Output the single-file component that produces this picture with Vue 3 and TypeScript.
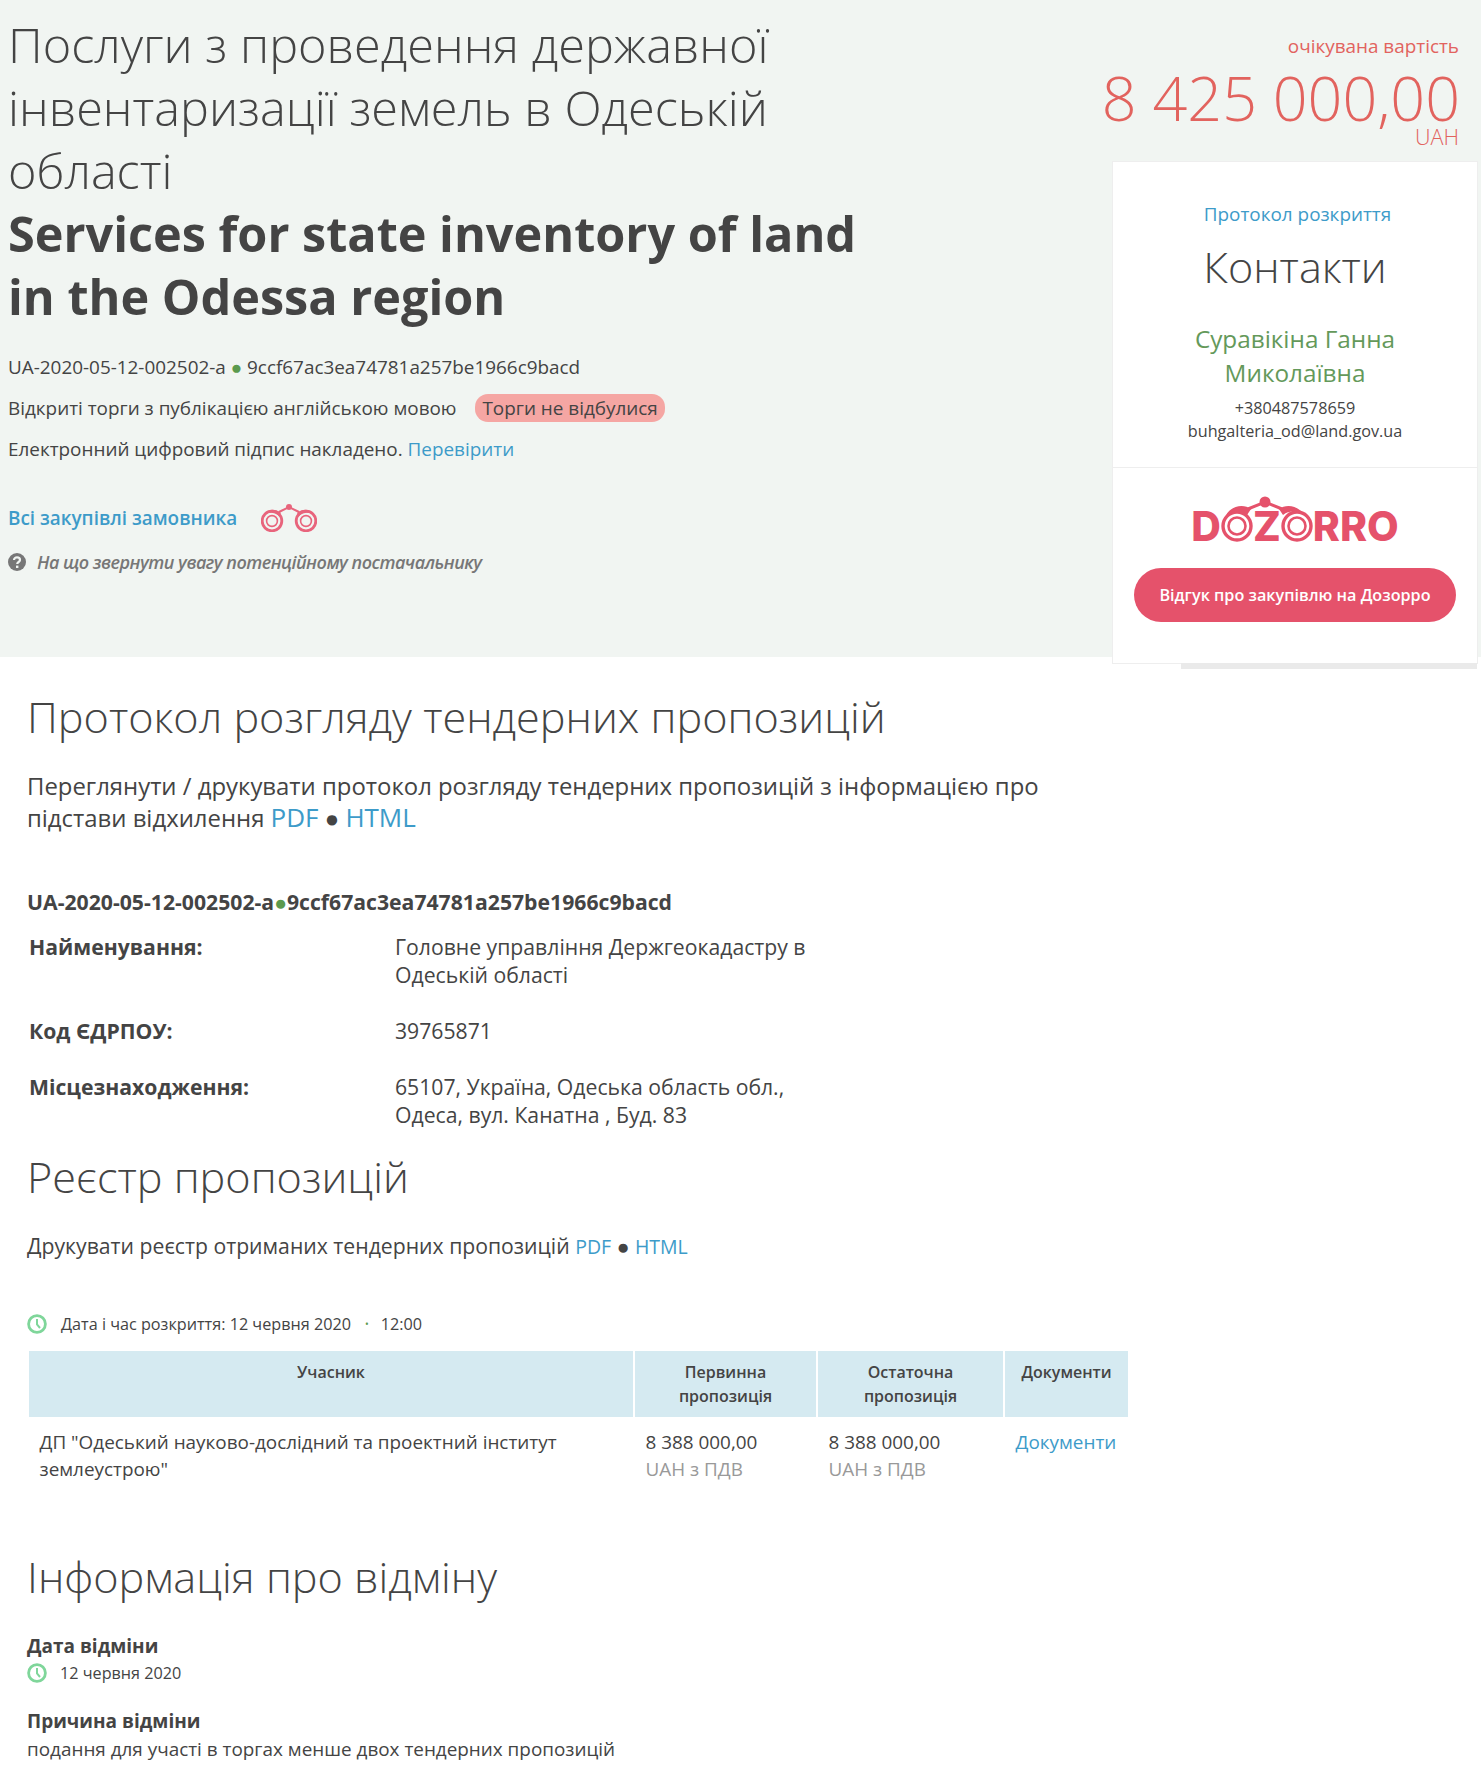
<template>
  <div class="page">
    <header class="top">
      <div class="top-main">
        <h1 class="title">
          Послуги з проведення державної інвентаризації земель в Одеській області
          <strong>Services for state inventory of land in the Odessa region</strong>
        </h1>
        <p class="meta first">UA-2020-05-12-002502-a <span class="dot">●</span> 9ccf67ac3ea74781a257be1966c9bacd</p>
        <p class="meta">
          Відкриті торги з публікацією англійською мовою
          <span class="status">Торги не відбулися</span>
        </p>
        <p class="meta">Електронний цифровий підпис накладено. <a class="link">Перевірити</a></p>
        <div class="buyer">
          <a class="link">Всі закупівлі замовника</a>
          <svg class="bino" viewBox="0 0 56 28" fill="none" stroke="#e8647c">
            <circle cx="11" cy="17" r="9.8" stroke-width="2.8" />
            <circle cx="11" cy="17" r="5.4" stroke-width="1.6" />
            <circle cx="45" cy="17" r="9.8" stroke-width="2.8" />
            <circle cx="45" cy="17" r="5.4" stroke-width="1.6" />
            <path d="M3 11 C6 5 14 4 20 9 L18 12 C13 8 8 8 3 11 Z" fill="#e8647c" stroke="none" />
            <path d="M53 11 C50 5 42 4 36 9 L38 12 C43 8 48 8 53 11 Z" fill="#e8647c" stroke="none" />
            <path d="M18 8 L28 3 L38 8" stroke-width="2" />
            <circle cx="28" cy="3" r="3" fill="#e8647c" stroke="none" />
          </svg>
        </div>
        <p class="hint">
          <svg class="hint-icon" viewBox="0 0 18 18">
            <circle cx="9" cy="9" r="9" fill="#777" />
            <path d="M6 7 C6 3.6 12 3.6 12 7 C12 9 9.2 9 9.2 11" fill="none" stroke="#f1f5f2" stroke-width="2.2" />
            <rect x="8" y="12.6" width="2.4" height="2.4" fill="#f1f5f2" />
          </svg>
          <em>На що звернути увагу потенційному постачальнику</em>
        </p>
      </div>
      <aside class="top-side">
        <div class="price-label">очікувана вартість</div>
        <div class="price">8 425 000,00</div>
        <div class="currency">UAH</div>
        <div class="card">
          <div class="card-top">
            <a class="link protocol">Протокол розкриття</a>
            <div class="contacts">Контакти</div>
            <div class="person">Суравікіна Ганна Миколаївна</div>
            <div class="phone">+380487578659</div>
            <div class="phone">buhgalteria_od@land.gov.ua</div>
          </div>
          <div class="card-bottom">
            <div class="logo">
              <span>D</span>
              <svg class="eye" viewBox="0 0 32 32" fill="none" stroke="#e5526b">
                <circle cx="16" cy="16" r="14" stroke-width="3.4" />
                <circle cx="16" cy="16" r="8.5" stroke-width="2.6" />
              </svg>
              <span>Z</span>
              <svg class="eye" viewBox="0 0 32 32" fill="none" stroke="#e5526b">
                <circle cx="16" cy="16" r="14" stroke-width="3.4" />
                <circle cx="16" cy="16" r="8.5" stroke-width="2.6" />
              </svg>
              <span>RRO</span>
              <svg class="bridge" viewBox="0 0 210 24">
                <path d="M36 19 C42 9 54 8 61 13 L57 19 C50 14 43 15 36 19 Z" fill="#e5526b" />
                <path d="M114 19 C108 9 96 8 89 13 L93 19 C100 14 107 15 114 19 Z" fill="#e5526b" />
                <path d="M58 13 L75 6 L92 13" fill="none" stroke="#e5526b" stroke-width="3" />
                <circle cx="75" cy="6" r="5.5" fill="#e5526b" />
              </svg>
            </div>
            <button class="review">Відгук про закупівлю на Дозорро</button>
          </div>
        </div>
      </aside>
    </header>

    <main class="content">
      <h2 class="heading">Протокол розгляду тендерних пропозицій</h2>
      <p class="lead">
        Переглянути / друкувати протокол розгляду тендерних пропозицій з інформацією про підстави відхилення
        <a class="link big">PDF</a> ● <a class="link big">HTML</a>
      </p>
      <div class="code">UA-2020-05-12-002502-a<span class="dot">●</span>9ccf67ac3ea74781a257be1966c9bacd</div>
      <dl class="org">
        <template v-for="row in orgRows" :key="row.label">
          <dt>{{ row.label }}</dt>
          <dd>{{ row.value }}</dd>
        </template>
      </dl>

      <h2 class="heading registry">Реєстр пропозицій</h2>
      <p class="print">
        Друкувати реєстр отриманих тендерних пропозицій <a class="link small">PDF</a> ● <a class="link small">HTML</a>
      </p>
      <div class="opened">
        <svg class="clock" viewBox="0 0 20 20" fill="none" stroke="#7fd69a" stroke-width="2.8">
          <circle cx="10" cy="10" r="8.4" />
          <path d="M10 5 V10.5 L13 14" stroke-width="2" />
        </svg>
        <span>Дата і час розкриття: 12 червня 2020</span>
        <span class="tiny-dot">•</span>
        <span>12:00</span>
      </div>
      <table class="bids">
        <thead>
          <tr>
            <th class="col-name">Учасник</th>
            <th class="col-first">Первинна пропозиція</th>
            <th class="col-last">Остаточна пропозиція</th>
            <th class="col-docs">Документи</th>
          </tr>
        </thead>
        <tbody>
          <tr>
            <td>ДП "Одеський науково-дослідний та проектний інститут землеустрою"</td>
            <td>8 388 000,00<br /><span class="vat">UAH з ПДВ</span></td>
            <td>8 388 000,00<br /><span class="vat">UAH з ПДВ</span></td>
            <td><a class="link">Документи</a></td>
          </tr>
        </tbody>
      </table>

      <h2 class="heading cancel">Інформація про відміну</h2>
      <div class="sub">Дата відміни</div>
      <div class="cancel-date">
        <svg class="clock" viewBox="0 0 20 20" fill="none" stroke="#7fd69a" stroke-width="2.8">
          <circle cx="10" cy="10" r="8.4" />
          <path d="M10 5 V10.5 L13 14" stroke-width="2" />
        </svg>
        <span>12 червня 2020</span>
      </div>
      <div class="sub reason">Причина відміни</div>
      <div class="reason-text">подання для участі в торгах менше двох тендерних пропозицій</div>
    </main>
  </div>
</template>

<script setup lang="ts">
interface OrgRow {
  label: string;
  value: string;
}

const orgRows: OrgRow[] = [
  { label: "Найменування:", value: "Головне управління Держгеокадастру в Одеській області" },
  { label: "Код ЄДРПОУ:", value: "39765871" },
  { label: "Місцезнаходження:", value: "65107, Україна, Одеська область обл., Одеса, вул. Канатна , Буд. 83" },
];
</script>

<style>
html,
body {
  margin: 0;
  background: #fff;
}
</style>

<style scoped>
.page {
  width: 1481px;
  height: 1789px;
  overflow: hidden;
  font-family: "Open Sans", "Noto Sans", sans-serif;
  color: #444;
}

.link {
  color: #3d9bc9;
}

/* top block */
.top {
  display: flex;
  justify-content: space-between;
  height: 657px;
  background: #f1f5f2;
  padding-left: 8px;
  box-sizing: border-box;
}

.top-main {
  width: 880px;
}

.title {
  margin: 13px 0 0;
  font-size: 48.6px;
  line-height: 63px;
  font-weight: 300;
  color: #444;
}

.title strong {
  display: block;
  font-weight: 700;
}

.meta {
  margin: 0;
  font-size: 18.9px;
  line-height: 41px;
}

.meta.first {
  margin-top: 19px;
}

.dot {
  color: #5b9a4e;
}

.status {
  margin-left: 14px;
  padding: 1px 7px;
  background: #f5a6a3;
  border-radius: 13px;
}

.buyer {
  display: flex;
  align-items: center;
  gap: 24px;
  margin-top: 34px;
  font-size: 18.9px;
  font-weight: 600;
}

.bino {
  width: 56px;
  height: 28px;
}

.hint {
  display: flex;
  align-items: center;
  gap: 11px;
  margin: 18px 0 0;
  font-size: 18px;
  font-weight: 600;
  color: #777;
  letter-spacing: -0.5px;
}

.hint-icon {
  width: 18px;
  height: 18px;
}

.top-side {
  width: 366px;
  margin-right: 3px;
  flex-shrink: 0;
}

.price-label {
  margin-top: 34px;
  padding-right: 19px;
  text-align: right;
  font-size: 18.9px;
  line-height: 24px;
  color: #e2635e;
}

.price {
  margin-top: 6px;
  margin-left: -30px;
  padding-right: 18px;
  text-align: right;
  font-size: 61px;
  line-height: 68px;
  font-weight: 300;
  color: #e2635e;
  white-space: nowrap;
}

.currency {
  margin-top: -7px;
  padding-right: 19px;
  text-align: right;
  font-size: 21.6px;
  line-height: 24px;
  font-weight: 300;
  color: #e2635e;
}

.card {
  position: relative;
  height: 503px;
  margin-top: 12px;
  background: #fff;
  border: 1px solid #eee;
  box-sizing: border-box;
  text-align: center;
}

.card::after {
  content: "";
  position: absolute;
  left: 68px;
  right: 0;
  top: 100%;
  height: 6px;
  background: #eaeaea;
}

.card-top {
  height: 306px;
  padding-top: 40px;
  box-sizing: border-box;
  border-bottom: 1px solid #eee;
}

.protocol {
  display: inline-block;
  margin-left: 5px;
  font-size: 18.9px;
  line-height: 24px;
}

.contacts {
  margin-top: 11px;
  font-size: 43.2px;
  line-height: 60px;
  font-weight: 300;
}

.person {
  width: 250px;
  margin: 25px auto 7px;
  font-size: 24.3px;
  line-height: 34px;
  color: #64995a;
}

.phone {
  font-size: 16.2px;
  line-height: 22.5px;
}

.card-bottom {
  padding-top: 28px;
}

.logo {
  position: relative;
  display: flex;
  align-items: center;
  justify-content: center;
  box-sizing: border-box;
  width: 210px;
  height: 46px;
  margin: 0 auto;
  padding-top: 14px;
  font-family: Inter, sans-serif;
  font-size: 41px;
  line-height: 32px;
  font-weight: 800;
  color: #e5526b;
}

.eye {
  width: 32px;
  height: 32px;
  flex-shrink: 0;
}

.bridge {
  position: absolute;
  left: 0;
  top: 0;
  width: 210px;
  height: 24px;
}

.review {
  display: block;
  width: 322px;
  height: 54px;
  margin: 26px auto 0;
  background: #e5526b;
  border: 0;
  border-radius: 27px;
  color: #fff;
  font-family: inherit;
  font-size: 16.2px;
  font-weight: 600;
}

/* main content */
.content {
  padding: 0 27px;
}

.heading {
  margin: 0;
  font-size: 43.2px;
  line-height: 60px;
  font-weight: 300;
}

.heading:first-child {
  margin-top: 30px;
}

.lead {
  width: 1040px;
  margin: 23px 0 0;
  font-size: 23.9px;
  line-height: 31.5px;
}

.lead .big {
  font-size: 26px;
}

.code {
  margin-top: 54px;
  font-size: 21.2px;
  font-weight: 700;
}

.org {
  display: grid;
  grid-template-columns: 366px 420px;
  row-gap: 28px;
  margin: 17px 0 0 2px;
  font-size: 21.2px;
  line-height: 28px;
}

.org dt {
  font-weight: 700;
}

.org dd {
  margin: 0;
}

.registry {
  margin-top: 18px;
}

.print {
  margin: 25px 0 0;
  font-size: 21.2px;
  line-height: 28px;
}

.print .small {
  font-size: 19.5px;
}

.opened {
  display: flex;
  align-items: center;
  margin: 51px 0 0;
  font-size: 16.2px;
  line-height: 24px;
}

.clock {
  width: 20px;
  height: 20px;
  margin-right: 13px;
}

.opened .clock {
  margin-right: 14px;
}

.tiny-dot {
  margin: 0 12px 0 14px;
  color: #5b9a4e;
  font-size: 10px;
}

.bids {
  width: 1103px;
  margin-top: 13px;
  border-collapse: separate;
  border-spacing: 2px;
  table-layout: fixed;
}

.bids th {
  height: 66px;
  padding: 9px 10px;
  box-sizing: border-box;
  background: #d5eaf1;
  font-size: 16px;
  line-height: 24px;
  font-weight: 600;
  vertical-align: top;
}

.col-name {
  width: 604px;
}

.col-first {
  width: 181px;
}

.col-last {
  width: 185px;
}

.bids td {
  padding: 10px 10px 10px 10.5px;
  font-size: 18.9px;
  line-height: 27px;
  vertical-align: top;
}

.vat {
  color: #999;
}

.cancel {
  margin-top: 52px;
}

.sub {
  margin-top: 26px;
  font-size: 19px;
  line-height: 26px;
  font-weight: 700;
}

.cancel-date {
  display: flex;
  align-items: center;
  font-size: 16.2px;
  line-height: 28px;
}

.sub.reason {
  margin-top: 21px;
}

.reason-text {
  font-size: 18.9px;
  line-height: 30px;
}
</style>
